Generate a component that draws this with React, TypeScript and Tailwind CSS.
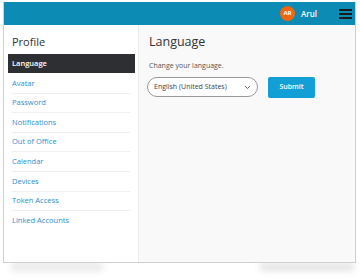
import React from 'react'

const items = ['Avatar', 'Password', 'Notifications', 'Out of Office', 'Calendar', 'Devices', 'Token Access', 'Linked Accounts']

const App = () => {
  return (
    <div className="w-[360px] h-[280px] bg-white overflow-hidden" style={{ fontFamily: '"Open Sans", "Noto Sans", sans-serif' }}>
      <div className="ml-[3px] mt-[2px] w-[353px] h-[261px] flex flex-col border border-t-0 border-[#cfcfcf] relative z-10 bg-white">
        {/* Header */}
        <div className="h-[23px] bg-[#0c8bb4] flex items-center justify-end pr-[3px]">
          <div className="w-[15px] h-[15px] rounded-full bg-[#f0670f] flex items-center justify-center text-white text-[6px] font-bold">AR</div>
          <span className="ml-[6px] text-white text-[8px] font-semibold">Arul</span>
          <button className="ml-[22px] w-[13px] flex flex-col gap-[2px]" aria-label="Menu">
            <span className="h-[2px] bg-[#1a1a1a]"></span>
            <span className="h-[2px] bg-[#1a1a1a]"></span>
            <span className="h-[2px] bg-[#1a1a1a]"></span>
          </button>
        </div>

        <div className="flex flex-1">
          {/* Sidebar */}
          <div className="w-[135px] bg-white border-r border-[#ececec] pt-[9px]">
            <div className="pl-[8px] text-[11px] text-[#333] h-[20px]">Profile</div>
            <div className="ml-[4px] mr-[3px] h-[19px] bg-[#2d2f33] text-white text-[7.5px] font-semibold flex items-center pl-[4px]">Language</div>
            <ul className="ml-[8px] mr-[8px] mt-[1px]">
              {items.map((item, i) => (
                <li
                  key={item}
                  className={`h-[19.6px] flex items-center text-[7.5px] text-[#2b8fcf] ${i < items.length - 1 ? 'border-b border-[#efefef]' : ''}`}
                >
                  {item}
                </li>
              ))}
            </ul>
          </div>

          {/* Content */}
          <div className="flex-1 bg-[#f9f9f9] pl-[8px] pt-[7px]">
            <h1 className="pl-[2px] text-[12.5px] text-[#333] leading-[20px]">Language</h1>
            <p className="pl-[2px] mt-[9px] text-[7px] text-[#555]">Change your language.</p>
            <div className="mt-[5px] flex items-center">
              <div className="w-[111px] h-[20px] rounded-full border border-[#999] bg-white flex items-center justify-between px-[6px]">
                <span className="text-[7px] text-[#444]">English (United States)</span>
                <svg width="7" height="5" viewBox="0 0 7 5" fill="none">
                  <path d="M1 1l2.5 2.5L6 1" stroke="#666" strokeWidth="1" />
                </svg>
              </div>
              <button className="ml-[10px] w-[47px] h-[21px] bg-[#129fd6] rounded-[2px] text-white text-[7px] font-semibold">Submit</button>
            </div>
          </div>
        </div>
      </div>

      {/* Shadows under the window */}
      <div className="flex justify-between w-[353px] ml-[3px]">
        <div className="ml-[8px] w-[92px] h-[8px] bg-[#e8e8e8] blur-[3px]"></div>
        <div className="mr-[2px] w-[94px] h-[8px] bg-[#e4e4e4] blur-[3px]"></div>
      </div>
    </div>
  )
}

export default App
